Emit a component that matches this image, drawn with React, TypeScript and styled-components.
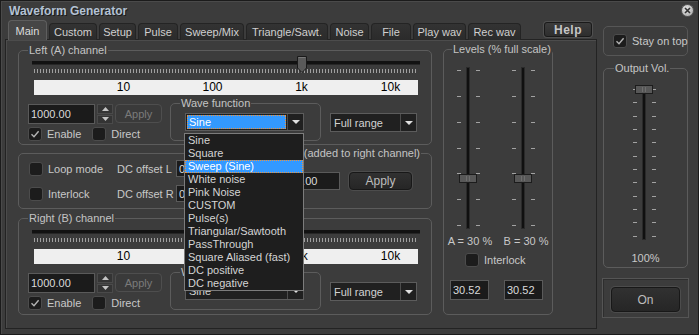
import React from "react";
import styled, { createGlobalStyle } from "styled-components";

const FONT = `"Liberation Sans", Arial, Helvetica, sans-serif`;

const GlobalStyle = createGlobalStyle`
  html, body { margin: 0; padding: 0; background: #3c3c3c; }
  body { font-family: ${FONT}; font-size: 11px; color: #c8c8c8; overflow: hidden; }
  *, *::before, *::after { box-sizing: border-box; }
`;

const Window = styled.div`
  width: 699px;
  height: 335px;
  background: #3c3c3c;
  border: 1px solid #1b1b1b;
  box-shadow: inset 1px 1px 0 #4a4a4a;
  display: flex;
  flex-direction: column;
`;

const TitleBar = styled.div`
  height: 19px;
  display: flex;
  align-items: center;
  padding: 0 4px 0 8px;
`;

const Title = styled.div`
  flex: 1;
  font-weight: bold;
  font-size: 12px;
  color: #b4c2d4;
  text-shadow: 1px 1px 0 #1a1a1a;
`;

const CloseBtn = styled.div`
  width: 13px;
  height: 13px;
  border-radius: 50%;
  background: radial-gradient(circle at 40% 35%, #e4e4e4, #a4a4a4);
  border: 1px solid #5a5a5a;
  display: flex;
  align-items: center;
  justify-content: center;
`;

const Body = styled.div`
  display: flex;
  padding-left: 4px;
`;

const LeftCol = styled.div`
  width: 592px;
  display: flex;
  flex-direction: column;
`;

const TabsRow = styled.div`
  height: 20px;
  display: flex;
  align-items: flex-end;
  gap: 2px;
  padding-left: 3px;
`;

const Tab = styled.div<{ $w: number; $active?: boolean }>`
  position: relative;
  z-index: ${(p) => (p.$active ? 2 : 0)};
  width: ${(p) => p.$w}px;
  height: ${(p) => (p.$active ? 20 : 17)}px;
  display: flex;
  align-items: center;
  justify-content: center;
  border-radius: 4px 4px 0 0;
  border: 1px solid ${(p) => (p.$active ? "#5e5e5e" : "#242424")};
  border-bottom: none;
  background: ${(p) => (p.$active ? "#464646" : "linear-gradient(#333, #2b2b2b)")};
  color: ${(p) => (p.$active ? "#dcdcdc" : "#cfcfcf")};
  font-size: 11px;
  white-space: nowrap;
`;

const HelpBtn = styled.div`
  align-self: flex-start;
  margin: 2px 5px 0 auto;
  width: 48px;
  height: 15px;
  border-radius: 3px;
  border: 1px solid #1a1a1a;
  box-shadow: 0 0 0 1px #505050;
  background: linear-gradient(#3c3c3c, #2e2e2e);
  color: #c6c6c6;
  font-weight: bold;
  font-size: 12px;
  display: flex;
  align-items: center;
  justify-content: center;
  letter-spacing: 0.5px;
`;

const Panel = styled.div`
  margin-top: -1px;
  height: 290px;
  border: 1px solid #232323;
  box-shadow: inset 1px 1px 0 #4c4c4c;
  background: #3c3c3c;
  padding: 4px 0 0 12px;
  display: flex;
  align-items: flex-start;
  gap: 11px;
`;

const GroupColumn = styled.div`
  width: 414px;
  display: flex;
  flex-direction: column;
  gap: 2px;
`;

const Group = styled.fieldset<{ $h: number; $w?: number; $mt?: number }>`
  margin: ${(p) => p.$mt ?? 0}px 0 0 0;
  padding: 0;
  min-width: 0;
  width: ${(p) => (p.$w ? `${p.$w}px` : "auto")};
  height: ${(p) => p.$h}px;
  border: 1px solid #5c5c5c;
  border-radius: 5px;
`;

const Legend = styled.legend<{ $right?: boolean; $ml?: number }>`
  padding: 0 1px;
  margin-left: ${(p) => (p.$right ? "auto" : `${p.$ml ?? 9}px`)};
  margin-right: ${(p) => (p.$right ? "10px" : "0")};
  line-height: 12px;
  font-size: 11px;
  color: #c4c4c4;
  white-space: nowrap;
`;

/* horizontal slider */
const SliderWrap = styled.div<{ $top: number }>`
  position: relative;
  display: flow-root;
  width: 388px;
  height: 18px;
  margin: ${(p) => p.$top}px 0 0 13px;
`;

const Track = styled.div`
  margin-top: 5px;
  height: 4px;
  background: #121212;
  border-bottom: 1px solid #262626;
`;

const Ticks = styled.div`
  margin: 4px 2px 0 2px;
  height: 4px;
  background: repeating-linear-gradient(90deg, #a0a0a0 0 1px, transparent 1px 3px);
`;

const HThumb = styled.svg<{ $x: number }>`
  position: absolute;
  top: 0;
  left: ${(p) => p.$x}px;
`;

const ScaleBar = styled.div<{ $top: number }>`
  margin: ${(p) => p.$top}px 0 0 15px;
  width: 384px;
  height: 15px;
  background: #efefef;
  color: #000;
  font-size: 12px;
  display: grid;
  grid-template-columns: repeat(4, 89px);
  padding-left: 45px;
  align-items: center;
  justify-items: center;
  line-height: 15px;
`;

const BottomRow = styled.div`
  display: flex;
  align-items: flex-start;
`;

const FreqCol = styled.div<{ $top: number }>`
  margin: ${(p) => p.$top}px 0 0 9px;
  display: flex;
  flex-direction: column;
  gap: 3px;
  width: 134px;
`;

const FreqRow = styled.div`
  display: flex;
  gap: 2px;
`;

const NumBox = styled.div<{ $w: number; $h?: number }>`
  width: ${(p) => p.$w}px;
  height: ${(p) => p.$h ?? 20}px;
  flex: none;
  background: #1b1b1b;
  border: 1px solid #5a5a5a;
  color: #dadada;
  font-size: 11px;
  padding-left: 2px;
  display: flex;
  align-items: center;
  white-space: nowrap;
  overflow: hidden;
`;

const Spin = styled.div`
  width: 16px;
  height: 20px;
  display: flex;
  flex-direction: column;
  gap: 1px;
`;

const SpinHalf = styled.div`
  flex: 1;
  background: #343434;
  border: 1px solid #4a4a4a;
  display: flex;
  align-items: center;
  justify-content: center;
`;

const Btn = styled.div<{ $w: number; $h: number; $disabled?: boolean }>`
  width: ${(p) => p.$w}px;
  height: ${(p) => p.$h}px;
  flex: none;
  border-radius: 4px;
  display: flex;
  align-items: center;
  justify-content: center;
  font-size: ${(p) => (p.$disabled ? 11 : 12)}px;
  color: ${(p) => (p.$disabled ? "#7a7a7a" : "#bdbdbd")};
  background: ${(p) => (p.$disabled ? "#3a3a3a" : "linear-gradient(#313131, #262626)")};
  border: 1px solid ${(p) => (p.$disabled ? "#4e4e4e" : "#181818")};
  box-shadow: ${(p) => (p.$disabled ? "none" : "0 0 0 1px #4c4c4c")};
`;

const CheckRow = styled.div`
  display: flex;
  gap: 11px;
`;

const CheckLabel = styled.label`
  display: inline-flex;
  align-items: center;
  gap: 5px;
  font-size: 11px;
  line-height: 14px;
  color: #c8c8c8;
  white-space: nowrap;
`;

const CheckBox = styled.span`
  width: 14px;
  height: 14px;
  flex: none;
  border-radius: 3px;
  background: #1c1c1c;
  border: 1px solid #4c4c4c;
  display: inline-flex;
  align-items: center;
  justify-content: center;
`;

const SelectBox = styled.div<{ $w: number; $h?: number; $mt: number; $ml: number }>`
  position: relative;
  flex: none;
  width: ${(p) => p.$w}px;
  height: ${(p) => p.$h ?? 18}px;
  margin: ${(p) => p.$mt}px 0 0 ${(p) => p.$ml}px;
  border: 1px solid #5c5c5c;
  background: #202020;
  display: flex;
`;

const SelectField = styled.div<{ $focus?: boolean }>`
  flex: 1;
  margin: 1px;
  padding-left: 2px;
  font-size: 11px;
  display: flex;
  align-items: center;
  color: ${(p) => (p.$focus ? "#ffffff" : "#d2d2d2")};
  background: ${(p) => (p.$focus ? "#3399ff" : "transparent")};
  outline: ${(p) => (p.$focus ? "1px dotted #f0943a" : "none")};
  outline-offset: -1px;
`;

const SelectArrow = styled.div`
  width: 16px;
  border-left: 1px solid #4c4c4c;
  display: flex;
  align-items: center;
  justify-content: center;
  &::after {
    content: "";
    border-left: 4px solid transparent;
    border-right: 4px solid transparent;
    border-top: 4px solid #e0e0e0;
  }
`;

const DropList = styled.ul`
  position: absolute;
  top: 19px;
  left: -2px;
  width: 120px;
  margin: 0;
  padding: 0;
  list-style: none;
  background: #1e1e1e;
  border: 1px solid #7c7c7c;
  z-index: 10;
`;

const DropItem = styled.li<{ $hl?: boolean }>`
  height: 13px;
  line-height: 13px;
  padding-left: 3px;
  font-size: 11px;
  white-space: nowrap;
  color: ${(p) => (p.$hl ? "#ffffff" : "#d4d4d4")};
  background: ${(p) => (p.$hl ? "#3399ff" : "transparent")};
  outline: ${(p) => (p.$hl ? "1px dotted #f0943a" : "none")};
  outline-offset: -1px;
`;

/* phase group */
const PhaseRow = styled.div`
  display: flex;
  align-items: center;
  margin-top: 1px;
`;

const DcGrid = styled.div`
  display: grid;
  grid-template-columns: 88px 59px 60px;
  grid-template-rows: 17px 17px;
  row-gap: 8px;
  align-items: center;
  margin-left: 10px;
`;

/* levels */
const LevelsBody = styled.div`
  display: flex;
  flex-direction: column;
`;

const SliderPair = styled.div`
  display: flex;
  gap: 30px;
  padding-left: 12px;
  margin-top: 9px;
  height: 166px;
`;

const LabelPair = styled.div`
  display: grid;
  grid-template-columns: 52px 60px;
  justify-items: center;
  margin-top: 5px;
  line-height: 12px;
  font-size: 11px;
  color: #c8c8c8;
  white-space: nowrap;
`;

const InterlockRow = styled.div`
  margin: 6px 0 0 21px;
`;

const InputPair = styled.div`
  display: flex;
  gap: 15px;
  padding-left: 6px;
  margin-top: 11px;
`;

/* right column */
const RightCol = styled.div`
  width: 85px;
  margin: 6px 0 0 6px;
  display: flex;
  flex-direction: column;
`;

const StayBox = styled.div`
  height: 30px;
  border: 1px solid #565656;
  border-radius: 5px;
  display: flex;
  align-items: center;
  padding-left: 9px;
`;

const OutBody = styled.div`
  display: flex;
  flex-direction: column;
  align-items: flex-start;
`;

const OutSlider = styled.div`
  margin: 9px 0 0 28px;
  height: 158px;
`;

const OutLabel = styled.div`
  align-self: center;
  margin-top: 11px;
  line-height: 12px;
  font-size: 11px;
  color: #c8c8c8;
`;

const OnFrame = styled.div`
  margin-top: 10px;
  margin-left: -1px;
  width: 87px;
  height: 40px;
  border: 1px solid #555;
  box-shadow: inset 1px 1px 0 #2e2e2e;
  padding: 8px 0 0 8px;
`;

const CheckMark = () => (
  <svg width="10" height="10" viewBox="0 0 10 10">
    <path d="M1.5 5.2 L4 7.7 L8.6 2.3" fill="none" stroke="#b4b4b4" strokeWidth="1.4" />
  </svg>
);

function Check({ checked, label }: { checked?: boolean; label: string }) {
  return (
    <CheckLabel>
      <CheckBox>{checked && <CheckMark />}</CheckBox>
      {label}
    </CheckLabel>
  );
}

function HSlider({ top, thumbX }: { top: number; thumbX: number }) {
  return (
    <SliderWrap $top={top}>
      <Track />
      <Ticks />
      <HThumb $x={thumbX} width="10" height="17" viewBox="0 0 10 17">
        <path d="M0.5 0.5 H9.5 V12 L5 16.5 L0.5 12 Z" fill="#5a5a5a" stroke="#1a1a1a" />
        <path d="M1.5 1.5 H8.5" stroke="#787878" />
      </HThumb>
    </SliderWrap>
  );
}

function VSlider({
  h,
  t0,
  t1,
  ticks,
  thumbY,
}: {
  h: number;
  t0: number;
  t1: number;
  ticks: number[];
  thumbY: number;
}) {
  return (
    <svg width="25" height={h} viewBox={`0 0 25 ${h}`}>
      {ticks.map((y, i) => (
        <g key={i}>
          <rect x="1" y={y} width="4" height="1" fill="#a2a2a2" />
          <rect x="20" y={y} width="4" height="1" fill="#a2a2a2" />
        </g>
      ))}
      <rect x="10.5" y={t0 + 0.5} width="3" height={t1 - t0} fill="#101010" stroke="#2a2a2a" />
      <rect x="3.5" y={thumbY + 0.5} width="17" height="8" fill="#585858" stroke="#1c1c1c" />
      <rect x="10" y={thumbY + 2} width="1" height="5" fill="#6e6e6e" />
      <rect x="13" y={thumbY + 2} width="1" height="5" fill="#6e6e6e" />
    </svg>
  );
}

function SpinButtons() {
  return (
    <Spin>
      <SpinHalf>
        <svg width="7" height="4" viewBox="0 0 7 4">
          <path d="M0 4 L3.5 0 L7 4 Z" fill="#c4c4c4" />
        </svg>
      </SpinHalf>
      <SpinHalf>
        <svg width="7" height="4" viewBox="0 0 7 4">
          <path d="M0 0 L3.5 4 L7 0 Z" fill="#c4c4c4" />
        </svg>
      </SpinHalf>
    </Spin>
  );
}

const waveOptions = [
  "Sine",
  "Square",
  "Sweep (Sine)",
  "White noise",
  "Pink Noise",
  "CUSTOM",
  "Pulse(s)",
  "Triangular/Sawtooth",
  "PassThrough",
  "Square Aliased (fast)",
  "DC positive",
  "DC negative",
];

function ChannelGroup({
  title,
  height,
  sliderTop,
  thumbX,
  mt,
  open,
}: {
  title: string;
  height: number;
  sliderTop: number;
  thumbX: number;
  mt?: number;
  open?: boolean;
}) {
  return (
    <Group $h={height} $mt={mt}>
      <Legend>{title}</Legend>
      <HSlider top={sliderTop} thumbX={thumbX} />
      <ScaleBar $top={6}>
        <span>10</span>
        <span>100</span>
        <span>1k</span>
        <span>10k</span>
      </ScaleBar>
      <BottomRow>
        <FreqCol $top={9}>
          <FreqRow>
            <NumBox $w={67}>1000.00</NumBox>
            <SpinButtons />
            <Btn $w={47} $h={19} $disabled>
              Apply
            </Btn>
          </FreqRow>
          <CheckRow>
            <Check checked label="Enable" />
            <Check label="Direct" />
          </CheckRow>
        </FreqCol>
        <Group $h={44} $w={151} $mt={2} style={{ marginLeft: 8 }}>
          <Legend>Wave function</Legend>
          <SelectBox $w={119} $mt={4} $ml={14}>
            <SelectField $focus={open}>Sine</SelectField>
            <SelectArrow />
            {open && (
              <DropList>
                {waveOptions.map((o) => (
                  <DropItem key={o} $hl={o === "Sweep (Sine)"}>
                    {o}
                  </DropItem>
                ))}
              </DropList>
            )}
          </SelectBox>
        </Group>
        <SelectBox $w={87} $h={19} $mt={18} $ml={9}>
          <SelectField>Full range</SelectField>
          <SelectArrow />
        </SelectBox>
      </BottomRow>
    </Group>
  );
}

const tabs = [
  { label: "Main", w: 39 },
  { label: "Custom", w: 48 },
  { label: "Setup", w: 37 },
  { label: "Pulse", w: 40 },
  { label: "Sweep/Mix", w: 64 },
  { label: "Triangle/Sawt.", w: 82 },
  { label: "Noise", w: 39 },
  { label: "File", w: 40 },
  { label: "Play wav", w: 53 },
  { label: "Rec wav", w: 53 },
];

const levelTicks = [6, 32, 58, 84, 109, 135, 161];
const outTicks = Array.from({ length: 12 }, (_, k) => 6 + Math.round(k * 13.33));

export default function App() {
  return (
    <>
      <GlobalStyle />
      <Window>
        <TitleBar>
          <Title>Waveform Generator</Title>
          <CloseBtn>
            <svg width="7" height="7" viewBox="0 0 7 7">
              <path d="M1 1 L6 6 M6 1 L1 6" stroke="#333" strokeWidth="1.6" />
            </svg>
          </CloseBtn>
        </TitleBar>
        <Body>
          <LeftCol>
            <TabsRow>
              {tabs.map((t, i) => (
                <Tab key={t.label} $w={t.w} $active={i === 0}>
                  {t.label}
                </Tab>
              ))}
              <HelpBtn>Help</HelpBtn>
            </TabsRow>
            <Panel>
              <GroupColumn>
                <ChannelGroup title="Left (A) channel" height={101} sliderTop={0} thumbX={265} open />
                <Group $h={62}>
                  <Legend $right>Phase (added to right channel)</Legend>
                  <PhaseRow>
                    <DcGrid>
                      <Check label="Loop mode" />
                      <span>DC offset L</span>
                      <NumBox $w={60} $h={17}>0.000</NumBox>
                      <Check label="Interlock" />
                      <span>DC offset R</span>
                      <NumBox $w={60} $h={17}>0.000</NumBox>
                    </DcGrid>
                    <NumBox $w={47} $h={18} style={{ marginLeft: 57 }}>
                      0.00
                    </NumBox>
                    <Btn $w={63} $h={18} style={{ marginLeft: 9 }}>
                      Apply
                    </Btn>
                  </PhaseRow>
                </Group>
                <ChannelGroup title="Right (B) channel" height={103} sliderTop={1} thumbX={261} mt={1} />
              </GroupColumn>
              <Group $h={272} $w={110} $mt={-1}>
                <Legend $ml={8}>Levels (% full scale)</Legend>
                <LevelsBody>
                  <SliderPair>
                    <VSlider h={166} t0={3} t1={164} ticks={levelTicks} thumbY={110} />
                    <VSlider h={166} t0={3} t1={164} ticks={levelTicks} thumbY={110} />
                  </SliderPair>
                  <LabelPair>
                    <span>A = 30 %</span>
                    <span>B = 30 %</span>
                  </LabelPair>
                  <InterlockRow>
                    <Check label="Interlock" />
                  </InterlockRow>
                  <InputPair>
                    <NumBox $w={39}>30.52</NumBox>
                    <NumBox $w={39}>30.52</NumBox>
                  </InputPair>
                </LevelsBody>
              </Group>
            </Panel>
          </LeftCol>
          <RightCol>
            <StayBox>
              <Check checked label="Stay on top" />
            </StayBox>
            <Group $h={206} $mt={6}>
              <Legend $ml={10}>Output Vol.</Legend>
              <OutBody>
                <OutSlider>
                  <VSlider h={158} t0={2} t1={156} ticks={outTicks} thumbY={2} />
                </OutSlider>
                <OutLabel>100%</OutLabel>
              </OutBody>
            </Group>
            <OnFrame>
              <Btn $w={69} $h={25}>
                On
              </Btn>
            </OnFrame>
          </RightCol>
        </Body>
      </Window>
    </>
  );
}
